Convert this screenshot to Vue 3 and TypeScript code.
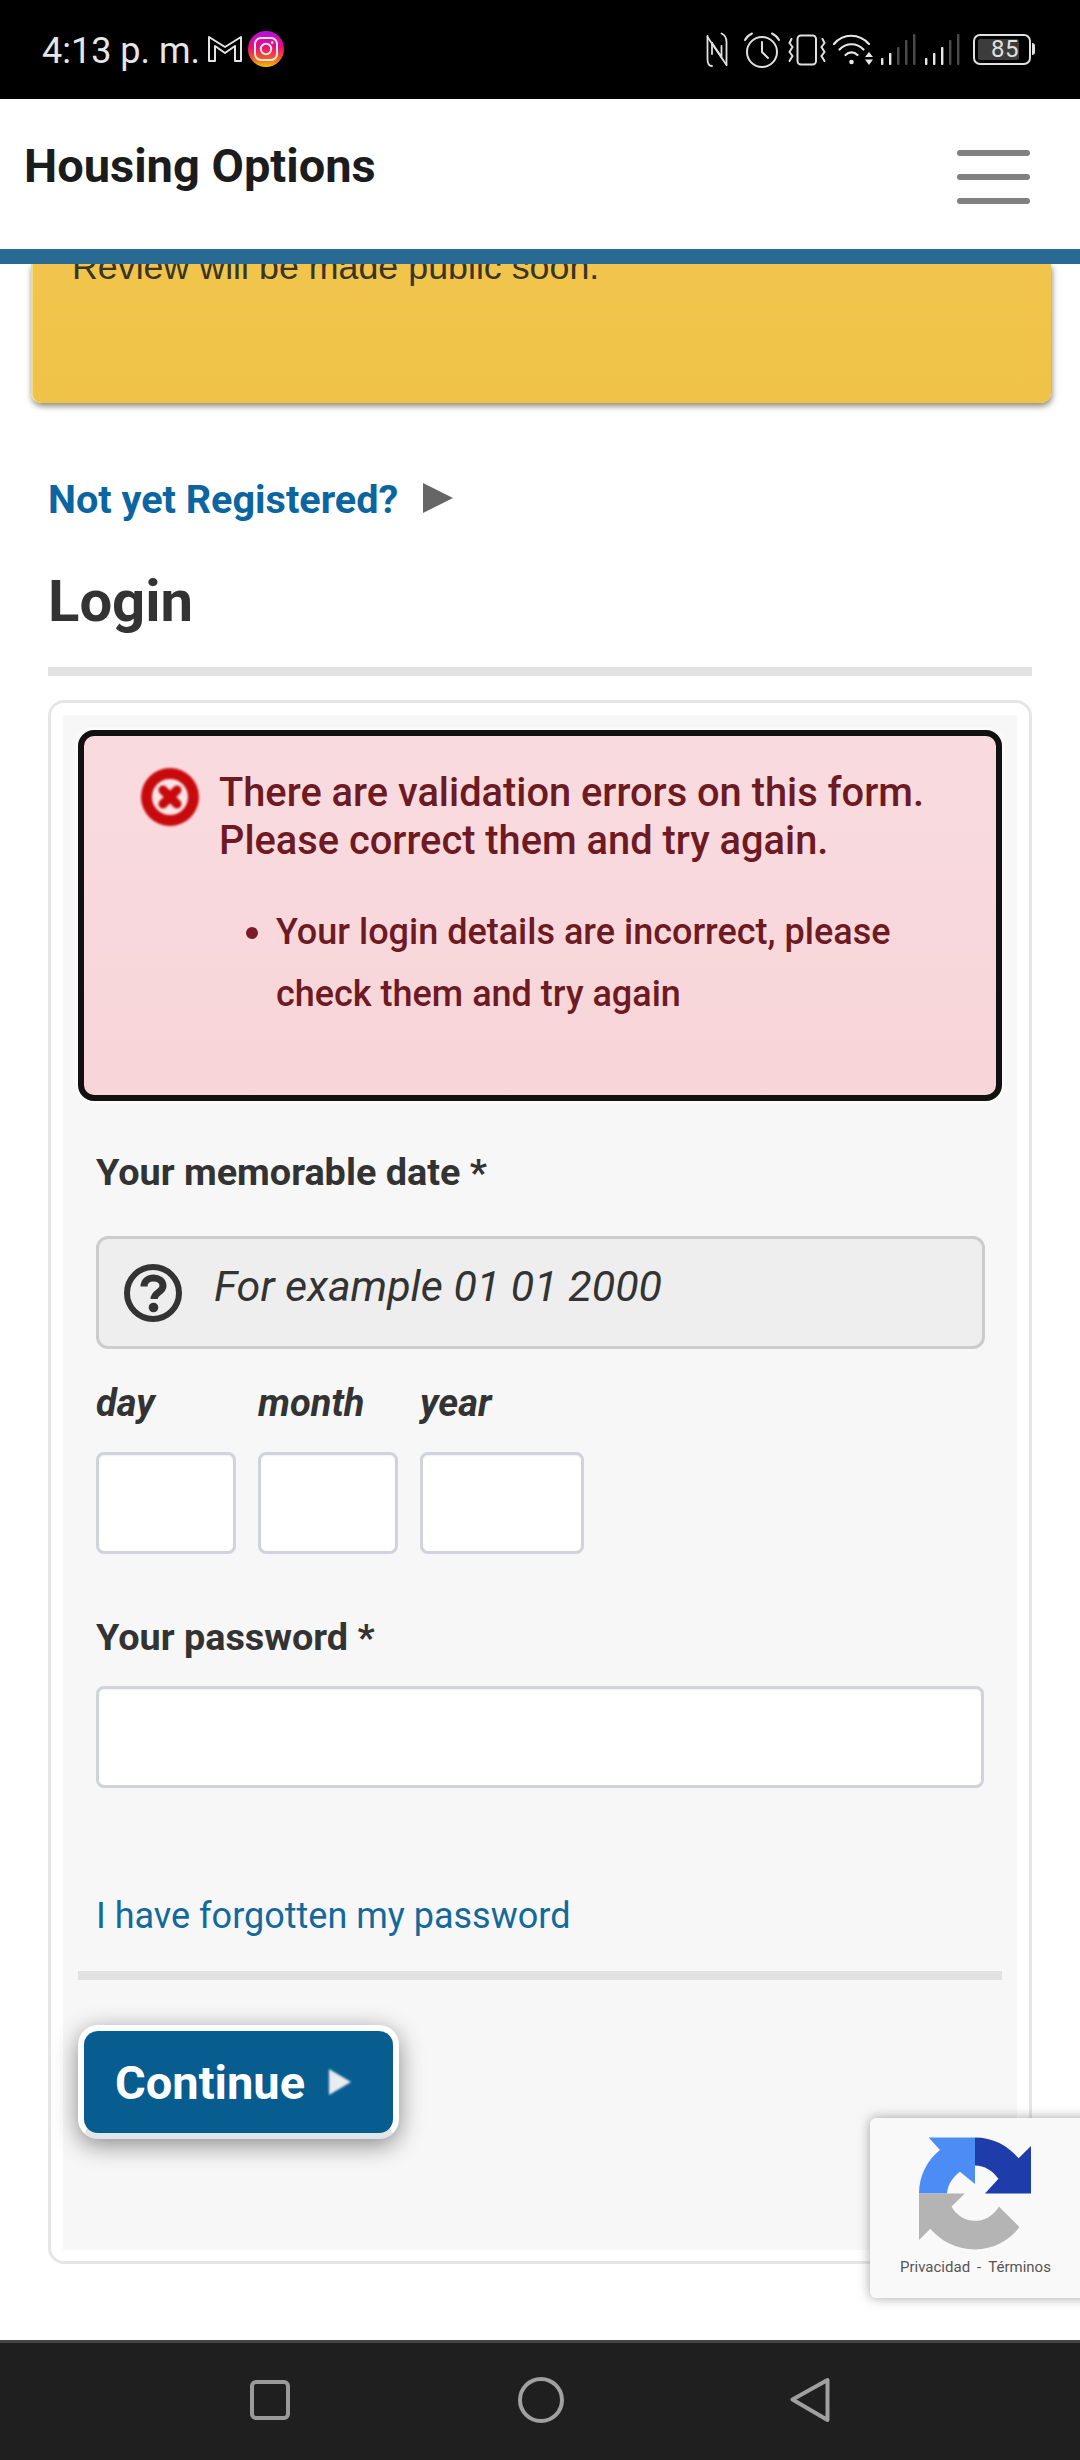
<script setup lang="ts">
const cellBars = [
  { x: 1, top: 24, on: true },
  { x: 9, top: 19, on: true },
  { x: 17, top: 13, on: false },
  { x: 25, top: 6, on: false },
  { x: 33, top: 0, on: false }
]
const cellBars2 = [
  { x: 1, top: 24, on: true },
  { x: 9, top: 19, on: true },
  { x: 17, top: 13, on: true },
  { x: 25, top: 6, on: false },
  { x: 33, top: 0, on: false }
]
const dateFields = [
  { label: 'day', cls: 'col-s' },
  { label: 'month', cls: 'col-s' },
  { label: 'year', cls: 'col-l' }
]
</script>

<template>
  <div class="screen">
    <div class="status">
      <span class="time">4:13 p. m.</span>
      <svg class="ic-gmail" width="34" height="27" viewBox="0 0 34 27" fill="none" stroke="#e4e4e4" stroke-width="2" stroke-linejoin="round">
        <path d="M1 2 L17 12 L33 2 V26 H27 V11 L17 18 L7 11 V26 H1 Z" />
      </svg>
      <svg class="ic-insta" width="36" height="36" viewBox="0 0 36 36">
        <defs>
          <linearGradient id="ig" x1="0.5" y1="0" x2="0.5" y2="1">
            <stop offset="0" stop-color="#b50fe0" />
            <stop offset="0.45" stop-color="#e6107c" />
            <stop offset="0.75" stop-color="#f2591e" />
            <stop offset="1" stop-color="#f0c20c" />
          </linearGradient>
        </defs>
        <circle cx="18" cy="18" r="18" fill="url(#ig)" />
        <rect x="7" y="7" width="22" height="22" rx="6" fill="none" stroke="#f6e6ee" stroke-width="2" />
        <circle cx="18" cy="18" r="5.2" fill="none" stroke="#f6e6ee" stroke-width="2" />
        <circle cx="24.2" cy="11.6" r="1.3" fill="#f6e6ee" />
      </svg>
      <div class="status-right">
        <svg width="22" height="36" viewBox="0 0 22 36" fill="none" stroke="#e0e0e0" stroke-width="1.8" stroke-linecap="round">
          <path d="M1.5 4 V27 C1.5 31 2.5 34 6 34" />
          <path d="M15.5 1.5 C19 3 20.5 6 20.5 10 V33" />
          <path d="M1.5 5 L20.5 33" />
          <path d="M6 11 L15.5 25 V14" />
          <path d="M6 22 V11" />
        </svg>
        <svg width="38" height="36" viewBox="0 0 38 36" fill="none" stroke="#e0e0e0" stroke-width="2" stroke-linecap="round">
          <circle cx="19" cy="20" r="15" />
          <path d="M19 10 V20 L25 26" />
          <path d="M2 8 C3.500 5 6 3 9 1.500" />
          <path d="M36 8 C34.500 5 32 3 29 1.500" />
        </svg>
        <svg width="38" height="32" viewBox="0 0 38 32" fill="none" stroke="#e0e0e0" stroke-width="2" stroke-linecap="round">
          <rect x="9.500" y="1.500" width="18.500" height="29" rx="3.500" />
          <path d="M3.500 5 L1.500 9 L4.500 13 L1.500 18 L4.500 22 L1.500 27" />
          <path d="M34.500 5 L36.500 9 L33.500 13 L36.500 18 L33.500 22 L36.500 27" />
        </svg>
        <svg width="42" height="32" viewBox="0 0 42 32" fill="none" stroke="#e8e8e8" stroke-width="2.2" stroke-linecap="round">
          <path d="M1 10 C10 -1 26 -1 36 10" />
          <path d="M6.500 15.500 C13 8.500 24 8.500 30.500 15.500" />
          <path d="M12.500 21 C16 17.500 21 17.500 24.500 21" />
          <circle cx="18.500" cy="28" r="2.300" fill="#e8e8e8" stroke="none" />
          <path d="M36 18 L40 23 H32 Z M32 25.500 H40 L36 31 Z" fill="#e8e8e8" stroke="none" />
        </svg>
        <svg class="cell" width="36" height="32" viewBox="0 0 36 32">
          <rect v-for="b in cellBars" :key="b.x" :x="b.x" :y="b.top" width="2.400" :height="31 - b.top" rx="0.800" :fill="b.on ? '#e8e8e8' : '#4b4b4b'" />
        </svg>
        <svg class="cell" width="36" height="32" viewBox="0 0 36 32">
          <rect v-for="b in cellBars2" :key="b.x" :x="b.x" :y="b.top" width="2.400" :height="31 - b.top" rx="0.800" :fill="b.on ? '#e8e8e8' : '#4b4b4b'" />
        </svg>
        <div class="battery">
          <span class="batt-fill">85</span>
          <span class="batt-cap"></span>
        </div>
      </div>
    </div>

    <header class="top">
      <span class="brand">Housing Options</span>
      <button class="burger" type="button" aria-label="Menu"><i></i><i></i><i></i></button>
    </header>

    <main class="content">
      <section class="notice"><p>Review will be made public soon.</p></section>

      <a class="register">Not yet Registered?<svg width="30" height="30" viewBox="0 0 30 30"><path d="M0 0 L30 15 L0 30 Z" fill="#666" /></svg></a>
      <h1 class="title">Login</h1>
      <div class="rule"></div>

      <div class="panel">
        <div class="panel-in">
          <div class="errors">
            <div class="err-head">
              <svg class="err-ic" width="58" height="58" viewBox="0 0 58 58">
                <circle cx="29" cy="29" r="29" fill="#c80a0d" />
                <circle cx="29" cy="29" r="18" fill="#fbe3e6" />
                <path d="M22 22 L36 36 M36 22 L22 36" stroke="#c80a0d" stroke-width="9" stroke-linecap="round" />
              </svg>
              <p class="err-title">There are validation errors on this form.<br />Please correct them and try again.</p>
            </div>
            <ul class="err-list">
              <li><span class="dot"></span><span class="err-text">Your login details are incorrect, please check them and try again</span></li>
            </ul>
          </div>

          <div class="fields">
            <label class="lbl first">Your memorable date *</label>
            <div class="hint">
              <svg width="58" height="58" viewBox="0 0 58 58" fill="none">
                <circle cx="29" cy="29" r="26" stroke="#333" stroke-width="6" />
                <path d="M20 22.500 C20 17 24.500 14 29.500 14 C34.500 14 39 17 39 22 C39 28 30 28.500 30 35" stroke="#333" stroke-width="7" />
                <circle cx="29.500" cy="43.500" r="4.800" fill="#333" />
              </svg>
              <span class="hint-text">For example 01 01 2000</span>
            </div>
            <div class="date-row">
              <div v-for="f in dateFields" :key="f.label" class="date-col" :class="f.cls">
                <span class="date-lbl">{{ f.label }}</span>
                <input class="inp" type="text" :aria-label="f.label" />
              </div>
            </div>
            <label class="lbl pass">Your password *</label>
            <input class="inp inp-wide" type="password" aria-label="Your password" />
            <a class="forgot">I have forgotten my password</a>
          </div>

          <div class="rule rule-in"></div>

          <button class="cta" type="button">Continue<svg class="cta-arrow" width="22" height="26" viewBox="0 0 22 26"><path d="M0 0 L22 13 L0 26 Z" fill="#e9edf1" /></svg></button>
        </div>
      </div>
    </main>

    <aside class="recaptcha">
      <svg class="rc-logo" width="112" height="113" viewBox="0 0 64 64">
        <path d="M32 0 C42 0 50.900 4.600 56.900 11.900 L64 4.800 V32 H37.700 L45.400 23.600 C42 19 37.500 16 32 16 Z" fill="#1f3cab" />
        <path d="M32 0 H5.500 L12 7.200 C4.700 13 0 22 0 32 H16 C16.400 26.500 19.500 22.500 23.400 19.500 L32 26.500 Z" fill="#4c8df5" />
        <path d="M0 32 V58.500 L6.500 52.200 C12.500 59.500 21.900 64 32 64 C42.400 64 51.600 59 57.400 51.200 L45.600 39.400 C44.500 41.500 42.900 43.300 40.900 44.700 C38.900 46.300 36 47.600 32 47.600 C26 47.600 21 44 18.600 39.400 L26.200 32 Z" fill="#b4b4b4" />
      </svg>
      <div class="rc-links">Privacidad<span>-</span>Términos</div>
    </aside>

    <nav class="nav">
      <svg width="42" height="42" viewBox="0 0 42 42" fill="none" stroke="#9a9a9a" stroke-width="4"><rect x="3" y="3" width="36" height="36" rx="4" /></svg>
      <svg width="46" height="46" viewBox="0 0 46 46" fill="none" stroke="#a0a0a0" stroke-width="4"><circle cx="23" cy="23" r="21" /></svg>
      <svg width="40" height="46" viewBox="0 0 40 46" fill="none" stroke="#a0a0a0" stroke-width="4" stroke-linejoin="round"><path d="M37.500 3 V43 L2.500 22.500 Z" /></svg>
    </nav>
  </div>
</template>

<style>
html, body { margin: 0; background: #fff; }
</style>

<style scoped>
* { box-sizing: border-box; }
.screen {
  position: relative;
  width: 1080px;
  height: 2460px;
  overflow: hidden;
  background: #fff;
  display: flex;
  flex-direction: column;
  font-family: Roboto, "Liberation Sans", sans-serif;
  color: #333;
}
.status {
  height: 99px;
  background: #000;
  display: flex;
  align-items: center;
  padding: 0 46px 0 42px;
  flex: none;
}
.time { font-size: 36px; color: #e6e6e6; line-height: 42px; margin-top: 2px; }
.ic-gmail { margin-left: 8px; margin-top: -2px; }
.ic-insta { margin-left: 6px; margin-top: -1px; }
.status-right { margin-left: auto; display: flex; align-items: center; }
.status-right svg:nth-child(1) { margin-right: 15px; }
.status-right svg:nth-child(2) { margin-right: 7px; }
.status-right svg:nth-child(3) { margin-right: 7px; }
.status-right svg:nth-child(4) { margin-right: 5px; }
.cell { margin-right: 8px; }
.battery {
  position: relative;
  width: 58px;
  height: 31px;
  border: 2.500px solid #e0e0e0;
  border-radius: 7px;
  padding: 3px;
  margin-left: 5px;
  margin-right: 3px;
  display: flex;
}
.batt-fill {
  width: 41px;
  background: #3c3c3c;
  border-radius: 2px;
  color: #e0e0e0;
  font-size: 24px;
  line-height: 20px;
  text-align: right;
  letter-spacing: 0.5px;
}
.batt-cap {
  position: absolute;
  right: -6px;
  top: 7px;
  width: 3.500px;
  height: 12px;
  background: #e0e0e0;
  border-radius: 0 3px 3px 0;
}
.top {
  position: relative;
  z-index: 2;
  height: 165px;
  flex: none;
  background: #fff;
  border-bottom: 15px solid #286a94;
  display: flex;
  align-items: center;
  justify-content: space-between;
  padding: 0 50px 0 24px;
}
.brand { font-size: 47px; font-weight: 700; color: #1c1c1c; line-height: 52px; margin-bottom: 16px; }
.burger {
  width: 73px;
  border: 0;
  padding: 0;
  margin-top: 6px;
  background: none;
  display: flex;
  flex-direction: column;
  gap: 18px;
}
.burger i { display: block; height: 6px; border-radius: 3px; background: #808080; }
.content { flex: 1; min-height: 0; }
.notice {
  height: 139px;
  margin: 0 29px 0 31px;
  background: linear-gradient(#f1c54b, #efc347);
  border-left: 2px solid #f6d987;
  border-radius: 0 0 10px 10px;
  box-shadow: 1px 3px 6px rgba(60, 50, 20, 0.6);
  overflow: hidden;
  padding-left: 39px;
}
.notice p {
  margin: -17px 0 0;
  font-family: "Liberation Sans", Arial, sans-serif;
  font-size: 35.8px;
  line-height: 40px;
  color: #3a3526;
}
.register {
  display: flex;
  align-items: center;
  gap: 25px;
  margin: 74px 0 0 48px;
  font-size: 39.6px;
  font-weight: 700;
  line-height: 46px;
  color: #0b65a0;
}
.register svg { margin-top: -4px; }
.title {
  margin: 44px 0 0 48px;
  font-size: 58px;
  line-height: 68px;
  font-weight: 700;
  color: #333;
}
.rule { height: 9px; background: #e2e2e2; margin: 32px 48px 0; }
.panel {
  margin: 24px 48px 0;
  height: 1564px;
  border: 3px solid #e6e6e6;
  border-radius: 16px;
  background: #fff;
  padding: 12px 12px 11px;
}
.panel-in {
  height: 100%;
  background: #f7f7f7;
  padding: 15px;
}
.errors {
  height: 371px;
  border: 6px solid #111;
  border-radius: 16px;
  background: linear-gradient(#f9dbdf, #f7d5d9);
  box-shadow: 0 0 0 3px #fbfbfb;
  padding: 33px 20px 0 57px;
  color: #6e1a23;
}
.err-head { display: flex; gap: 20px; align-items: flex-start; }
.err-ic { flex: none; margin-top: -1px; filter: blur(0.8px); }
.err-title { margin: 0; font-size: 39.8px; line-height: 48px; font-weight: 500; white-space: nowrap; }
.err-list { list-style: none; margin: 36px 0 0; padding: 0 0 0 105px; }
.err-list li { display: flex; gap: 18px; }
.dot { flex: none; width: 12px; height: 12px; border-radius: 50%; background: #7a1c27; margin-top: 26px; }
.err-text { font-size: 36px; line-height: 62px; font-weight: 500; max-width: 640px; }
.fields { padding: 0 17px 0 18px; }
.lbl { display: block; font-size: 37.8px; font-weight: 700; line-height: 44px; color: #333; }
.lbl.first { margin-top: 49px; }
.hint {
  margin-top: 42px;
  height: 113px;
  border: 3px solid #ccc;
  border-radius: 12px;
  background: #eee;
  display: flex;
  align-items: center;
  gap: 32px;
  padding-left: 25px;
  font-size: 43px;
  font-style: italic;
  color: #333;
}
.hint-text { margin-bottom: 13px; }
.date-row { display: flex; gap: 22px; margin-top: 32px; }
.date-col { display: flex; flex-direction: column; gap: 27px; }
.col-s { width: 140px; }
.col-l { width: 164px; }
.date-lbl { font-size: 38px; font-weight: 700; font-style: italic; line-height: 44px; }
.inp {
  display: block;
  width: 100%;
  height: 102px;
  border: 3px solid #d0d4da;
  border-radius: 8px;
  background: #fff;
  outline: 0;
  box-shadow: inset 0 1px 2px rgba(0, 0, 0, 0.06);
}
.lbl.pass { margin-top: 61px; margin-bottom: 27px; }
.inp-wide { width: 888px; }
.forgot {
  display: block;
  margin-top: 106px;
  font-size: 36px;
  line-height: 44px;
  color: #13699b;
}
.rule-in { margin: 33px 0 0; }
.cta {
  display: flex;
  align-items: center;
  margin-top: 45px;
  width: 321px;
  height: 114px;
  padding: 0 0 0 31px;
  border: 6px solid #fff;
  border-bottom-color: #e2e6e9;
  border-radius: 20px;
  background: #075c90;
  color: #fff;
  font-family: inherit;
  font-size: 47px;
  font-weight: 700;
  box-shadow: 0 6px 24px rgba(0, 0, 0, 0.45);
}
.cta-arrow { margin-left: 24px; filter: blur(1px); }
.recaptcha {
  position: absolute;
  left: 870px;
  top: 2118px;
  width: 256px;
  height: 180px;
  background: #f9f9f9;
  border-radius: 6px;
  box-shadow: 0 0 12px rgba(90, 90, 90, 0.55);
  padding: 19px 0 0 49px;
}
.rc-logo { display: block; filter: blur(0.5px); }
.rc-links {
  margin: 8px 0 0 -19px;
  font-size: 15px;
  line-height: 18px;
  color: #555;
  white-space: nowrap;
}
.rc-links span { margin: 0 7px; }
.nav {
  flex: none;
  height: 120px;
  background: #1f1f1f;
  border-top: 3px solid #444;
  display: flex;
  align-items: center;
  padding: 0 250px 3px 249px;
  justify-content: space-between;
}
</style>
